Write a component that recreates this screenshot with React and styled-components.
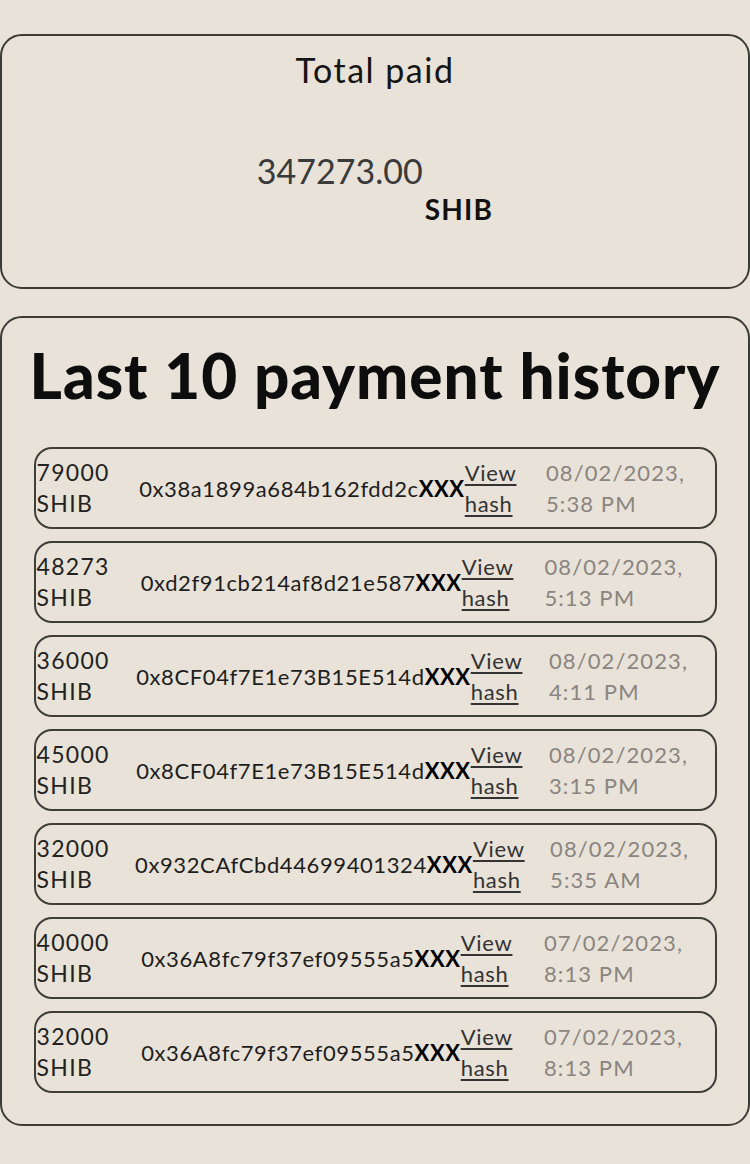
import React from "react";
import styled, { createGlobalStyle } from "styled-components";

const GlobalStyle = createGlobalStyle`
  html, body {
    margin: 0;
    padding: 0;
    background: #e8e2d8;
  }
  body {
    font-family: Lato, "Noto Sans", sans-serif;
    color: #1a1a1a;
  }
`;

const Page = styled.main`
  width: 750px;
  padding-top: 34px;
  display: flex;
  flex-direction: column;
  gap: 27px;
`;

const Card = styled.section`
  box-sizing: border-box;
  width: 750px;
  height: ${(p) => p.$height}px;
  border: 2px solid #3b3b36;
  border-radius: 22px;
  display: flex;
  flex-direction: column;
  align-items: center;
`;

const CardLabel = styled.h2`
  margin: 14px 0 0;
  font-size: 34px;
  font-weight: 400;
  line-height: 40px;
  letter-spacing: 1.5px;
  color: #151515;
`;

const TotalRow = styled.div`
  margin-top: 60px;
  display: flex;
  align-items: flex-start;
`;

const TotalValue = styled.span`
  font-size: 34px;
  font-weight: 400;
  line-height: 42px;
  color: #3a3a3a;
`;

const TotalUnit = styled.span`
  margin-top: 42px;
  margin-left: 2px;
  font-size: 28px;
  font-weight: 700;
  line-height: 34px;
  letter-spacing: 1.2px;
  color: #111;
`;

const Title = styled.h1`
  margin: 19px 0 0;
  font-size: 62px;
  font-weight: 900;
  line-height: 76px;
  letter-spacing: 1px;
  color: #0d0d0d;
`;

const List = styled.div`
  margin-top: 34px;
  width: 683px;
  display: flex;
  flex-direction: column;
  gap: 12px;
`;

const Row = styled.div`
  box-sizing: border-box;
  height: 82px;
  border: 2px solid #3f3f3a;
  border-radius: 18px;
  display: flex;
  align-items: center;
  padding-left: 1px;
  font-size: 22px;
  line-height: 31px;
`;

const Amount = styled.div`
  color: #222;
  font-size: 23px;
  letter-spacing: 1.3px;
`;

const Rest = styled.div`
  flex: 1;
  display: flex;
  align-items: center;
  justify-content: space-evenly;
`;

const Tx = styled.div`
  display: flex;
  align-items: center;
`;

const Hash = styled.span`
  color: #1d1d1d;
  letter-spacing: 0.6px;
  b {
    font-weight: 700;
    color: #000;
  }
`;

const HashLink = styled.a`
  color: #333;
  letter-spacing: 0.7px;
  text-decoration: underline;
  text-decoration-thickness: 2px;
  text-underline-offset: 3px;
`;

const DateText = styled.div`
  color: #8a8580;
  letter-spacing: 1.1px;
`;

const payments = [
  { amount: "79000", hash: "0x38a1899a684b162fdd2c", date: "08/02/2023,", time: "5:38 PM" },
  { amount: "48273", hash: "0xd2f91cb214af8d21e587", date: "08/02/2023,", time: "5:13 PM" },
  { amount: "36000", hash: "0x8CF04f7E1e73B15E514d", date: "08/02/2023,", time: "4:11 PM" },
  { amount: "45000", hash: "0x8CF04f7E1e73B15E514d", date: "08/02/2023,", time: "3:15 PM" },
  { amount: "32000", hash: "0x932CAfCbd44699401324", date: "08/02/2023,", time: "5:35 AM" },
  { amount: "40000", hash: "0x36A8fc79f37ef09555a5", date: "07/02/2023,", time: "8:13 PM" },
  { amount: "32000", hash: "0x36A8fc79f37ef09555a5", date: "07/02/2023,", time: "8:13 PM" },
];

export default function App() {
  return (
    <Page>
      <GlobalStyle />
      <Card $height={255}>
        <CardLabel>Total paid</CardLabel>
        <TotalRow>
          <TotalValue>347273.00</TotalValue>
          <TotalUnit>SHIB</TotalUnit>
        </TotalRow>
      </Card>

      <Card $height={810}>
        <Title>Last 10 payment history</Title>
        <List>
          {payments.map((p, i) => (
            <Row key={i}>
              <Amount>
                {p.amount}
                <br />
                SHIB
              </Amount>
              <Rest>
                <Tx>
                  <Hash>
                    {p.hash}
                    <b>XXX</b>
                  </Hash>
                  <HashLink href="#">
                    View
                    <br />
                    hash
                  </HashLink>
                </Tx>
                <DateText>
                  {p.date}
                  <br />
                  {p.time}
                </DateText>
              </Rest>
            </Row>
          ))}
        </List>
      </Card>
    </Page>
  );
}
